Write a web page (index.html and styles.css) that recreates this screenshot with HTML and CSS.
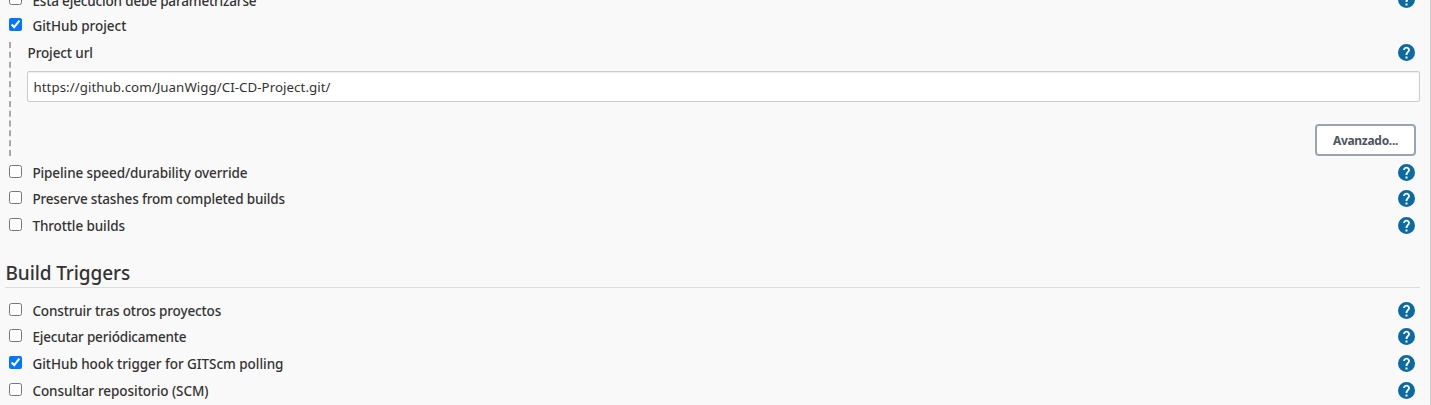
FILE: index.html
```
<!DOCTYPE html>
<html lang="es">
<head>
<meta charset="utf-8">
<title>Configuración</title>
<link rel="stylesheet" href="styles.css">
</head>
<body>
<svg class="defs" width="0" height="0">
  <symbol id="help" viewBox="0 0 24 24">
    <path d="M12 0a12 12 0 1 0 0 24 12 12 0 0 0 0-24zm1.400 20.400h-2.800v-2.800h2.800zm2.500-9.300l-1.100 1.100c-.9.900-1.400 1.700-1.400 3.400h-2.800v-.7c0-1.400.6-2.500 1.400-3.400l1.500-1.500c.4-.4.7-.9.700-1.500 0-1.200-1-2.100-2.200-2.100S9.800 7.300 9.800 8.500H7.200C7.200 5.900 9.300 3.900 12 3.900s4.900 2 4.900 4.600c0 1-.4 2-1 2.600z"/>
  </symbol>
</svg>
<main class="config">
  <div class="row first"><label class="option"><input type="checkbox"><span class="t-param">Esta ejecución debe parametrizarse</span></label><svg class="help"><use href="#help"/></svg></div>
  <div class="row tall"><label class="option"><input type="checkbox" checked><span class="t-github">GitHub project</span></label></div>
  <section class="nested">
    <div class="field-head"><span class="t-url">Project url</span><svg class="help"><use href="#help"/></svg></div>
    <input class="field" type="text" value="https://github.com/JuanWigg/CI-CD-Project.git/">
    <button class="advanced" type="button">Avanzado...</button>
  </section>
  <div class="row"><label class="option"><input type="checkbox"><span class="t-pipeline">Pipeline speed/durability override</span></label><svg class="help"><use href="#help"/></svg></div>
  <div class="row tall"><label class="option"><input type="checkbox"><span class="t-preserve">Preserve stashes from completed builds</span></label><svg class="help"><use href="#help"/></svg></div>
  <div class="row tall"><label class="option"><input type="checkbox"><span class="t-throttle">Throttle builds</span></label><svg class="help"><use href="#help"/></svg></div>
  <h2 class="heading"><span>Build Triggers</span></h2>
  <div class="row"><label class="option"><input type="checkbox"><span class="t-construir">Construir tras otros proyectos</span></label><svg class="help"><use href="#help"/></svg></div>
  <div class="row tall"><label class="option"><input type="checkbox"><span class="t-ejecutar">Ejecutar periódicamente</span></label><svg class="help"><use href="#help"/></svg></div>
  <div class="row tall"><label class="option"><input type="checkbox" checked><span class="t-hook">GitHub hook trigger for GITScm polling</span></label><svg class="help"><use href="#help"/></svg></div>
  <div class="row tall"><label class="option"><input type="checkbox"><span class="t-scm">Consultar repositorio (SCM)</span></label><svg class="help"><use href="#help"/></svg></div>
</main>
</body>
</html>
```
FILE: styles.css
```
* { box-sizing: border-box; }
body {
  margin: 0;
  height: 405px;
  overflow: hidden;
  background: #f9f9f9;
  color: #333;
  font: 500 13.5px/20px "Noto Sans", "Open Sans", sans-serif;
}
.defs { display: block; }
.config {
  width: 1431px;
  height: 418px;
  margin-top: -13px;
  padding: 0 10px 0 5px;
  border-right: 1px solid #ccc;
}
.row {
  display: flex;
  justify-content: space-between;
  align-items: flex-start;
  height: 26px;
  padding: 0 5.5px 0 4px;
}
.tall { height: 27px; }
.option { display: flex; align-items: flex-start; gap: 10.4px; white-space: nowrap; }
.option input { width: 13px; height: 13px; margin: 5px 0 0; }
.option span { padding-top: 3px; }
.first .option span { padding-top: 4px; }
.t-param { letter-spacing: -.16px; }
.t-github { letter-spacing: -.03px; }
.t-url { letter-spacing: -.1px; }
.t-pipeline { letter-spacing: -.09px; }
.t-preserve { letter-spacing: -.15px; }
.t-throttle { letter-spacing: -.1px; }
.t-construir { letter-spacing: -.14px; }
.t-ejecutar { letter-spacing: -.18px; }
.t-hook { letter-spacing: -.04px; }
.t-scm { letter-spacing: -.05px; }
.help { width: 17px; height: 17px; margin-top: 3.5px; fill: #0b6aa2; }
.nested {
  display: flex;
  flex-direction: column;
  height: 114px;
  margin: 2px 0 4px 4px;
  padding-left: 16px;
  border-left: 2px dashed #a9a9a9;
}
.field-head {
  display: flex;
  justify-content: space-between;
  align-items: flex-start;
  height: 29px;
  padding: 1px 5.5px 0 .5px;
}
.field-head .help { margin-top: .5px; }
.field {
  height: 31px;
  width: 100%;
  padding: 0 6px 0 5.5px;
  border: 1px solid #ccc;
  border-radius: 2px;
  background: #fff;
  box-shadow: inset 0 1px 1px rgba(0, 0, 0, .075);
  color: #333;
  font: 400 13.3px "Noto Sans", "Open Sans", sans-serif;
  letter-spacing: .05px;
}
.advanced {
  align-self: flex-end;
  width: 101px;
  height: 32px;
  margin: 22px 4px 0 0;
  padding: 0;
  border: 2px solid #9aa5af;
  border-radius: 4px;
  background: #fff;
  color: #4d545d;
  font: 700 12px "Noto Sans", "Open Sans", sans-serif;
  letter-spacing: -.3px;
}
.heading {
  height: 48px;
  margin: 0 0 10px;
  padding: 20px 0 0 .5px;
  border-bottom: 1px solid #ddd;
  font: 500 19px/26px "Noto Sans", "Open Sans", sans-serif;
  letter-spacing: -.1px;
}
```
